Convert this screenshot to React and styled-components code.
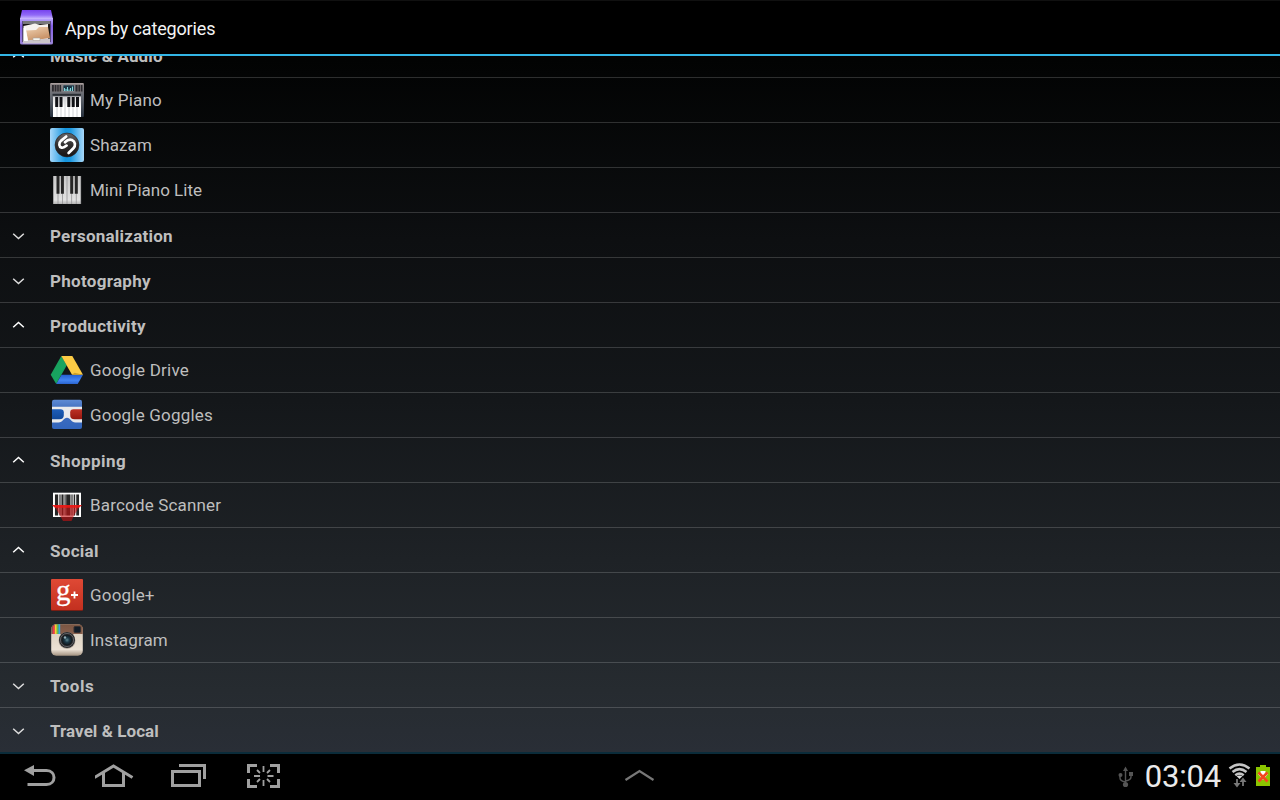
import React from 'react';
import styled, { createGlobalStyle } from 'styled-components';

const GlobalStyle = createGlobalStyle`
  * { box-sizing: border-box; }
  body { margin: 0; background: #000; overflow: hidden; }
`;

const Screen = styled.div`
  width: 1280px;
  height: 800px;
  display: flex;
  flex-direction: column;
  overflow: hidden;
  font-family: Roboto, sans-serif;
  background: linear-gradient(180deg, #000 0, #020303 60px, #0d0f11 240px, #14171a 400px, #1e2226 560px, #262b30 690px, #292e36 752px);
`;

const ActionBar = styled.header`
  flex: none;
  height: 56px;
  display: flex;
  align-items: center;
  gap: 9px;
  padding-left: 16px;
  background: #000;
  border-top: 1px solid #101010;
  border-bottom: 2px solid #33b5e5;
`;

const Title = styled.h1`
  margin: 3px 0 0;
  font-size: 18px;
  font-weight: 400;
  line-height: 24px;
  letter-spacing: -0.15px;
  color: #f3f3f3;
`;

const List = styled.main`
  flex: none;
  height: 696px;
  overflow: hidden;
`;

const Rows = styled.div`
  margin-top: -23px;
`;

const Row = styled.div`
  height: 45px;
  display: flex;
  align-items: center;
  border-bottom: 1px solid rgba(255, 255, 255, 0.17);
  color: #bebebe;
`;

const CategoryRow = styled(Row)`
  padding-left: 12px;
  gap: 25px;
  &:last-child { border-bottom-color: transparent; }
`;

const CategoryName = styled.span`
  padding-top: 2px;
  font-size: 17px;
  font-weight: 700;
  line-height: 22px;
  letter-spacing: ${p => p.$spacing || 0}px;
`;

const AppRow = styled(Row)`
  padding-left: 50px;
  gap: 6px;
`;

const AppName = styled.span`
  font-size: 17px;
  line-height: 22px;
  letter-spacing: ${p => p.$spacing || 0}px;
`;

const Icon = styled.svg`
  display: block;
  flex: none;
`;

const HeaderIcon = styled(Icon)`
  margin-bottom: 1px;
`;

const NavBar = styled.footer`
  flex: none;
  height: 48px;
  display: grid;
  grid-template-columns: 1fr 40px 1fr;
  align-items: center;
  padding-bottom: 2px;
  background: #000;
  border-top: 2px solid #0b2c3a;
`;

const NavButtons = styled.nav`
  display: flex;
  gap: 35px;
  padding-left: 20px;
`;

const Status = styled.div`
  display: flex;
  justify-content: flex-end;
  align-items: center;
  padding-right: 8px;
`;

const Clock = styled.time`
  margin: 2px 7px 0 10px;
  font-size: 31px;
  line-height: 36px;
  letter-spacing: -0.2px;
  color: #eaeaea;
`;

const BoxIcon = () => (
  <HeaderIcon width="40" height="40" viewBox="16 7 40 40">
    <defs>
      <linearGradient id="boxTop" x2="0" y2="1"><stop stopColor="#7743ee" /><stop offset=".55" stopColor="#9069f7" /><stop offset="1" stopColor="#cdbcff" /></linearGradient>
      <linearGradient id="boxSide" x2="0" y2="1"><stop stopColor="#c0adff" /><stop offset=".3" stopColor="#8560e8" /><stop offset="1" stopColor="#9c86d8" /></linearGradient>
      <linearGradient id="folder" x2=".5" y2="1"><stop stopColor="#f0d3b4" /><stop offset="1" stopColor="#c68e62" /></linearGradient>
    </defs>
    <path d="M20 18H53V43Q53 44.500 51 44.500H22Q20 44.500 20 43Z" fill="url(#boxSide)" />
    <path d="M22 10H51L53 19H20Z" fill="url(#boxTop)" />
    <path d="M22.500 21H50.500V42H22.500Z" fill="#181616" />
    <path d="M23 21H50V24H23Z" fill="#77777a" />
    <path d="M23.500 26L35 23.500L40 25L48 24V40H23.500Z" fill="#f6f2ee" />
    <path d="M26 30.500L36 30L39 27L48 27L50 38L28 41Z" fill="url(#folder)" />
    <path d="M23 40.500L50 38.500V43.500H23Z" fill="#cbc5ca" />
    <path d="M33 38H40V40.500H33Z" fill="#f5f5f0" stroke="#aaa29e" strokeWidth=".6" />
    <path d="M23.500 28L25.500 27L28 41H23.500Z" fill="#fff" />
  </HeaderIcon>
);

const KeyboardIcon = () => (
  <Icon width="34" height="34" viewBox="0 0 34 34">
    <defs>
      <linearGradient id="kbBody" x2="0" y2="1"><stop stopColor="#8b8282" /><stop offset=".35" stopColor="#686c73" /><stop offset="1" stopColor="#26303d" /></linearGradient>
      <linearGradient id="kbKeys" x2="0" y2="1"><stop stopColor="#d4d4d6" /><stop offset=".5" stopColor="#fff" /></linearGradient>
    </defs>
    <rect width="34" height="34" rx="1" fill="url(#kbBody)" />
    <path d="M1 .7H33" stroke="#b0a6a4" />
    <path d="M2 2h9v6.500H2zM25.500 2h7v6.500h-7z" fill="#2b2a2e" />
    <path d="M4.300 2v7M6.800 2v7M9.200 2v7M28 2v7M30.500 2v7" stroke="#7c7576" strokeWidth=".8" />
    <rect x="13" y="2" width="11.500" height="6.500" fill="#1b3544" stroke="#a4a0a2" strokeWidth=".6" />
    <path d="M14.500 8V5M16 8V6M17.500 8V4M19 8V6.500M20.500 8V5M22.500 8V3.500" fill="none" stroke="#84d6dc" strokeWidth="1.100" />
    <path d="M2.500 11.800H31" stroke="#292d33" strokeWidth="2" />
    <rect x="3" y="13.500" width="28" height="20.500" fill="url(#kbKeys)" />
    <path d="M7 14v20M11 14v20M15 14v20M19 14v20M23 14v20M27 14v20" stroke="#c3c5c9" strokeWidth=".8" />
    <path d="M5.200 14h3v10h-3zM9.500 14h3v10h-3zM17.300 14h3v10h-3zM21.700 14h3v10h-3zM26 14H29v10h-3z" fill="#111216" />
  </Icon>
);

const ShazamIcon = () => (
  <Icon width="34" height="34" viewBox="0 0 34 34">
    <defs>
      <linearGradient id="shz"><stop stopColor="#a8d8fa" /><stop offset=".45" stopColor="#1695de" /><stop offset=".6" stopColor="#1b98e0" /><stop offset="1" stopColor="#a8d8fa" /></linearGradient>
      <linearGradient id="shzDisc" x2="0" y2="1"><stop stopColor="#68686a" /><stop offset=".5" stopColor="#302e2e" /><stop offset="1" stopColor="#171414" /></linearGradient>
    </defs>
    <rect width="34" height="34" rx="2" fill="url(#shz)" />
    <circle cx="17" cy="17" r="11.900" fill="url(#shzDisc)" stroke="#262325" strokeWidth=".7" />
    <path d="M16.200 8.500L11.200 12.600C8.300 15.200 9 18.800 11.600 19.600C13.400 20.200 14.800 19.200 16.600 17.600" fill="none" stroke="#fff" strokeWidth="2.700" strokeLinecap="round" />
    <path d="M15 14.300C17 12.200 19.400 10.900 22 12C25.400 13.500 25.900 17.600 23.400 20.200L18.600 25" fill="none" stroke="#fff" strokeWidth="2.700" strokeLinecap="round" />
  </Icon>
);

const PianoIcon = () => (
  <Icon width="34" height="34" viewBox="0 0 34 34">
    <defs><linearGradient id="mini" x2="0" y2="1"><stop stopColor="#c8c8c8" /><stop offset=".85" stopColor="#e2e2e2" /><stop offset="1" stopColor="#b4b4b4" /></linearGradient></defs>
    <rect x="3" y="3" width="28" height="28" fill="url(#mini)" />
    <path d="M3.500 3v28M8 3v28M12.500 3v28M17 3v28M21.600 3v28M26.300 3v28M30.700 3v28" stroke="#8b8b8d" strokeWidth=".7" />
    <path d="M6.500 3h3v17.700h-3zM10.900 3h3v17.700h-3zM20.200 3h3v17.700h-3zM24.800 3h3v17.700h-3z" fill="#252525" />
  </Icon>
);

const DriveIcon = () => (
  <Icon width="34" height="34" viewBox="0 0 34 34">
    <defs>
      <linearGradient id="drvG" x2="1" y2="1"><stop stopColor="#1a9d58" /><stop offset=".6" stopColor="#17a561" /><stop offset="1" stopColor="#08814a" /></linearGradient>
      <linearGradient id="drvB" x2="0" y2="1"><stop stopColor="#245fd0" /><stop offset=".6" stopColor="#4284f3" /><stop offset="1" stopColor="#2b65cf" /></linearGradient>
    </defs>
    <path d="M11.300 3L16.800 12.200L6.200 31L.7 21.700Z" fill="url(#drvG)" />
    <path d="M11.300 3H22.300L33 21.700H22Z" fill="#fccb45" />
    <path d="M11.500 21.700H33L27.700 31H6.200Z" fill="url(#drvB)" />
    <path d="M22 21.700L24.500 19.800L33 21.700Z" fill="#cf9f24" />
  </Icon>
);

const GogglesIcon = () => (
  <Icon width="34" height="34" viewBox="0 0 34 34">
    <defs>
      <linearGradient id="ggl" x2="0" y2="1"><stop stopColor="#5e8bd5" /><stop offset=".3" stopColor="#426fbd" /><stop offset="1" stopColor="#3265bd" /></linearGradient>
      <linearGradient id="lensL" x2="0" y2="1"><stop stopColor="#1d5db8" /><stop offset="1" stopColor="#11499a" /></linearGradient>
      <linearGradient id="lensR" x2="0" y2="1"><stop stopColor="#bd3025" /><stop offset="1" stopColor="#97180f" /></linearGradient>
    </defs>
    <rect x="2" y="1.700" width="30" height="29.300" rx="2" fill="url(#ggl)" />
    <path d="M2 8.800H32V24.500H25.500C21 24.500 20.500 19.800 17 19.800S13 24.500 8.500 24.500H2Z" fill="#e9eaec" />
    <path d="M2 11.200H10.500Q13.800 11.200 13.800 14.200V17Q13.800 21.300 9.500 21.300H2Z" fill="url(#lensL)" />
    <path d="M32 11.200H23.500Q20.200 11.200 20.200 14.200V17Q20.200 21.300 24.500 21.300H32Z" fill="url(#lensR)" />
  </Icon>
);

const BarcodeIcon = () => (
  <Icon width="34" height="34" viewBox="0 0 34 34">
    <rect x="3" y="4.700" width="28" height="24.300" fill="#fff" />
    <rect x="4.700" y="6.400" width="24.600" height="20.900" fill="#d9d9d9" />
    <path d="M5 6.400h3v21H5zM9.500 6.400h1v21h-1zM11.500 6.400h2v21h-2zM14.600 6.400h1v21h-1zM16.200 6.400h4.200v21h-4.200zM21.500 6.400h1v21h-1zM23.800 6.400h1.200v21h-1.200zM26.300 6.400h2.700v21h-2.700z" fill="#262626" />
    <path d="M2 17H32L28.500 20L23.500 28.500L21.500 33H13L10.500 28.500L5.500 20Z" fill="#c91013" fillOpacity=".6" />
    <path d="M2 17H32L29 19.800H5Z" fill="#f01714" fillOpacity=".85" />
  </Icon>
);

const GoogleG = styled.text`
  font-family: 'Liberation Serif', serif;
  font-size: 29px;
  fill: #fff;
  stroke: #fff;
  stroke-width: 0.3px;
`;

const PlusIcon = () => (
  <Icon width="34" height="34" viewBox="0 0 34 34">
    <defs><linearGradient id="gp" x2="0" y2="1"><stop stopColor="#df4935" /><stop offset="1" stopColor="#c3301f" /></linearGradient></defs>
    <rect x="1" y="2" width="32" height="31" rx="1" fill="#791e14" />
    <rect x="1" y="1" width="32" height="31" rx="1" fill="url(#gp)" />
    <GoogleG x="6" y="21.500">g</GoogleG>
    <path d="M21 17H28M24.500 13.500V20.500" stroke="#fff" strokeWidth="1.800" />
  </Icon>
);

const CameraIcon = () => (
  <Icon width="34" height="34" viewBox="0 0 34 34">
    <defs>
      <linearGradient id="camB" x2="0" y2="1"><stop stopColor="#d7cbb9" /><stop offset=".8" stopColor="#ebe1d4" /><stop offset="1" stopColor="#a2917f" /></linearGradient>
      <linearGradient id="camT" x2="0" y2="1"><stop stopColor="#795542" /><stop offset="1" stopColor="#88604e" /></linearGradient>
      <radialGradient id="camL"><stop stopColor="#5e8790" /><stop offset=".45" stopColor="#1d3947" /><stop offset="1" stopColor="#101519" /></radialGradient>
    </defs>
    <rect x="1.200" y="1.200" width="31.600" height="31.600" rx="5" fill="url(#camB)" />
    <path d="M1.200 11V6Q1.200 1.200 6 1.200H28Q32.800 1.200 32.800 6V11Z" fill="url(#camT)" />
    <path d="M2.800 3.500L4.800 1.700V11H2.800Z" fill="#f0384c" />
    <path d="M4.800 1.500h2V11h-2z" fill="#f8d035" />
    <path d="M6.800 1.300h1.700V11H6.800z" fill="#5bc64b" />
    <path d="M8.500 1.300h1.700V11H8.500z" fill="#35a6e8" />
    <rect x="24" y="3.500" width="6.500" height="6" rx="1" fill="#121c27" stroke="#332f30" />
    <circle cx="17" cy="17.500" r="8.500" fill="#b5aba1" />
    <circle cx="17" cy="17" r="8" fill="#28282a" />
    <circle cx="17" cy="17" r="6.600" fill="none" stroke="#81858a" strokeWidth=".6" />
    <circle cx="17" cy="17" r="5.300" fill="url(#camL)" />
    <circle cx="15" cy="14.500" r="1.200" fill="#94aeb7" />
  </Icon>
);

const Chevron = ({ open }) => (
  <Icon width="13" height="12" viewBox="0 0 13 12">
    <path d={open ? 'M1.200 8.300L6.500 3.500L11.800 8.300' : 'M1.200 4.700L6.500 9.500L11.800 4.700'} fill="none" stroke={open ? '#fff' : '#ddd'} strokeWidth="1.500" />
  </Icon>
);

const items = [
  { group: 'Music & Audio', open: true, spacing: 0.16 },
  { app: 'My Piano', Art: KeyboardIcon, spacing: 0.2 },
  { app: 'Shazam', Art: ShazamIcon, spacing: 0.12 },
  { app: 'Mini Piano Lite', Art: PianoIcon, spacing: 0 },
  { group: 'Personalization', spacing: 0.23 },
  { group: 'Photography', spacing: 0.3 },
  { group: 'Productivity', open: true, spacing: 0.31 },
  { app: 'Google Drive', Art: DriveIcon, spacing: 0.25 },
  { app: 'Google Goggles', Art: GogglesIcon, spacing: 0.2 },
  { group: 'Shopping', open: true, spacing: 0.45 },
  { app: 'Barcode Scanner', Art: BarcodeIcon, spacing: 0.17 },
  { group: 'Social', open: true, spacing: 0.3 },
  { app: 'Google+', Art: PlusIcon, spacing: 0.2 },
  { app: 'Instagram', Art: CameraIcon, spacing: 0.13 },
  { group: 'Tools', spacing: 0.55 },
  { group: 'Travel & Local', spacing: 0.06 },
];

const BackIcon = () => (
  <Icon width="40" height="30" viewBox="20 761 40 30" fill="none" stroke="#a0a0a0" strokeWidth="3">
    <path d="M32 770.500H46.500C56.500 770.500 56.500 784.500 46.500 784.500H27.500" />
    <path d="M24 770.300L34 765V776Z" fill="#a0a0a0" stroke="none" />
  </Icon>
);

const HomeIcon = () => (
  <Icon width="40" height="30" viewBox="95 761 40 30" fill="none" stroke="#a0a0a0" strokeWidth="3">
    <path d="M94.500 777.500L113.500 766L132.500 777.500M103.500 773V785.500H123.500V773" />
  </Icon>
);

const RecentIcon = () => (
  <Icon width="40" height="30" viewBox="170 761 40 30" fill="none" stroke="#a0a0a0" strokeWidth="3">
    <path d="M172.500 771.500H199.500V785.500H172.500ZM179 765.500H204.500V779" />
  </Icon>
);

const CaptureIcon = () => (
  <Icon width="40" height="30" viewBox="245 761 40 30" fill="none" stroke="#a0a0a0" strokeWidth="3">
    <path d="M257 765.500H248.500V773M270 765.500H278.500V773M248.500 779V786.500H257M278.500 779V786.500H270" />
    <path d="M263.500 766V772M263.500 780V786M254 776H260M267.500 776H273.500M257 770L260 773M270 770L267 773M257 782L260 779M270 782L267 779" strokeWidth="1.800" />
  </Icon>
);

const UpIcon = () => (
  <Icon width="40" height="30" viewBox="620 761 40 30" fill="none" stroke="#777" strokeWidth="2.200">
    <path d="M625.500 780L639.500 771L653.500 780" />
  </Icon>
);

const UsbIcon = () => (
  <Icon width="18" height="24" viewBox="1117 763 18 24" fill="none" stroke="#555" strokeWidth="1.400">
    <path d="M1125.500 768V785M1120 774V777Q1120 780 1125.500 781M1131 773V776Q1131 779 1125.500 780" />
    <path d="M1125.500 765.500L1128 770H1123ZM1129 771H1133V775H1129Z" fill="#555" stroke="none" />
    <circle cx="1120.500" cy="774" r="2" fill="#555" stroke="none" />
    <circle cx="1125.500" cy="783.500" r="2.600" fill="#555" stroke="none" />
  </Icon>
);

const WifiIcon = () => (
  <Icon width="26" height="26" viewBox="1228 762 26 26" fill="none" stroke="#c5c5c5" strokeWidth="2.500">
    <path d="M1229.500 767.500Q1239.500 759.500 1249.500 767.500M1232.500 771Q1239.500 765.300 1246.500 771M1235.300 774.300Q1239.500 771 1243.700 774.300" />
    <path d="M1236.700 775.300Q1239.500 773.500 1242.300 775.300L1239.500 778Z" fill="#ddd" stroke="none" />
    <path d="M1237 778V784M1243 779V785" stroke="#777" strokeWidth="1.800" />
    <path d="M1233.500 782H1240.500L1237 786.500ZM1239.500 781H1246.500L1243 776.500Z" fill="#777" stroke="none" />
  </Icon>
);

const BatteryIcon = () => (
  <Icon width="18" height="24" viewBox="1254 763 18 24">
    <path d="M1260 764H1266V766H1270V785H1256V766H1260Z" fill="#8bc500" />
    <path d="M1260.500 770H1265.500V773H1268L1263 779L1258 773H1260.500Z" fill="#fff" />
    <path d="M1258.500 771.500L1267.500 780.500M1267.500 771.500L1258.500 780.500" stroke="#f4471e" strokeWidth="2.700" />
  </Icon>
);

export default function App() {
  return (
    <Screen>
      <GlobalStyle />
      <ActionBar>
        <BoxIcon />
        <Title>Apps by categories</Title>
      </ActionBar>
      <List>
        <Rows>
          {items.map(({ group, app, Art, open, spacing }) => group ? (
            <CategoryRow key={group}>
              <Chevron open={open} />
              <CategoryName $spacing={spacing}>{group}</CategoryName>
            </CategoryRow>
          ) : (
            <AppRow key={app}>
              <Art />
              <AppName $spacing={spacing}>{app}</AppName>
            </AppRow>
          ))}
        </Rows>
      </List>
      <NavBar>
        <NavButtons>
          <BackIcon /><HomeIcon /><RecentIcon /><CaptureIcon />
        </NavButtons>
        <UpIcon />
        <Status>
          <UsbIcon />
          <Clock>03:04</Clock>
          <WifiIcon />
          <BatteryIcon />
        </Status>
      </NavBar>
    </Screen>
  );
}
